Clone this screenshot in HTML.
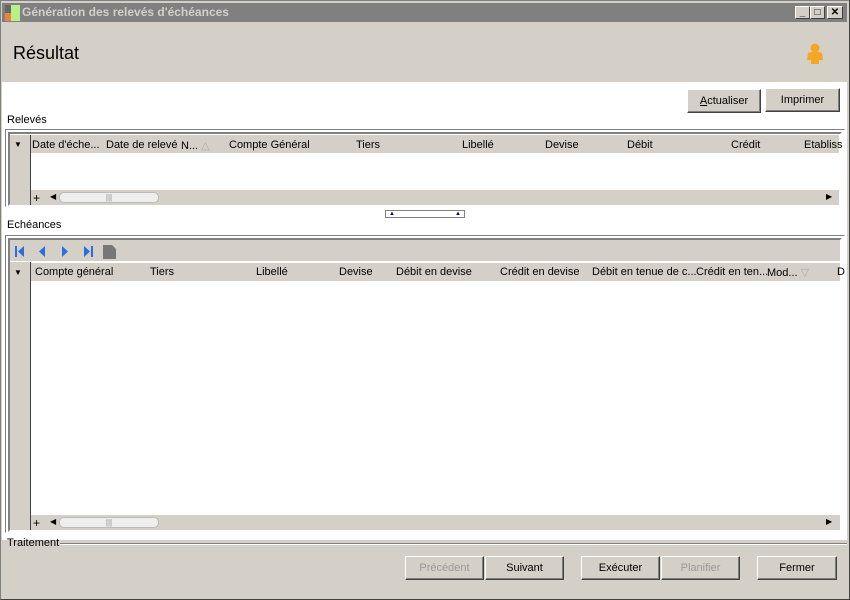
<!DOCTYPE html>
<html><head><meta charset="utf-8"><style>
*{box-sizing:border-box;margin:0;padding:0}
body{width:850px;height:600px;overflow:hidden;background:#d4d0c8;font-family:"Liberation Sans",sans-serif;font-size:11px;color:#000;position:relative}
.a{position:absolute}
.win{left:0;top:0;width:850px;height:600px;border:1px solid #808080;border-right-color:#404040;border-bottom-color:#404040}
.tb{left:2px;top:3px;width:845px;height:19px;background:#808080}
.tt{left:22px;top:5px;color:#d4d0c8;font-weight:bold;font-size:12px}
.cb{top:6px;width:15px;height:13px;background:#d4d0c8;border:1px solid;border-color:#fff #404040 #404040 #fff;font-size:10px;text-align:center;line-height:11px;font-weight:bold}
.btn{height:24px;background:#d4d0c8;border:1px solid;border-color:#fff #404040 #404040 #fff;box-shadow:inset -1px -1px 0 #808080;text-align:center;line-height:22px;font-size:11px}
.dis{color:#9a9a9a}
.sb{background:#d4d0c8}
</style></head><body>
<div class="a win"></div>
<div class="a tb"></div>
<div class="a" style="left:5px;top:5px;width:6px;height:16px;background:#666"></div>
<div class="a" style="left:5px;top:13px;width:6px;height:8px;background:#f08040"></div>
<div class="a" style="left:11px;top:5px;width:9px;height:16px;background:#b8f088"></div>
<div class="a tt">Génération des relevés d'échéances</div>
<div class="a cb" style="left:795px">_</div>
<div class="a cb" style="left:810px">□</div>
<div class="a cb" style="left:827px;width:16px">✕</div>
<div class="a" style="left:13px;top:43px;font-size:18px">Résultat</div>
<svg class="a" style="left:805px;top:42px" width="20" height="24"><circle cx="10" cy="6" r="4.5" fill="#f5a623"/><path d="M3 11 Q10 8 17 11 L18 18 L14 18 L14 22 L6 22 L6 18 L2 18Z" fill="#f5a623"/></svg>
<div class="a" style="left:2px;top:82px;width:845px;height:458px;background:#fff"></div>
<div class="a btn" style="left:687px;top:89px;width:74px"><u>A</u>ctualiser</div>
<div class="a btn" style="left:765px;top:88px;width:75px">Imprimer</div>
<div class="a" style="left:7px;top:114px">Relevés</div>
<div class="a" style="left:5px;top:129px;width:840px;height:78px;border:1px solid #808080;border-bottom-color:#fff;border-right-color:#fff"></div>
<div class="a" style="left:8px;top:132px;width:834px;height:74px;border:2px solid #808080;border-color:#808080 #fff #fff #808080;background:#fff"></div>
<div class="a sb" style="left:10px;top:135px;width:20px;height:70px"></div>
<div class="a" style="left:30px;top:135px;width:1px;height:70px;background:#404040"></div>
<div class="a sb" style="left:31px;top:135px;width:808px;height:18px"></div>
<div class="a" style="left:14px;top:140px;font-size:8px">▼</div>
<div class="a" style="left:32px;top:139px">Date d'éche...</div>
<div class="a" style="left:106px;top:139px">Date de relevé</div>
<div class="a" style="left:181px;top:139px">N... <span style="color:#aaa">△</span></div>
<div class="a" style="left:229px;top:139px">Compte Général</div>
<div class="a" style="left:356px;top:139px">Tiers</div>
<div class="a" style="left:462px;top:139px">Libellé</div>
<div class="a" style="left:545px;top:139px">Devise</div>
<div class="a" style="left:627px;top:139px">Débit</div>
<div class="a" style="left:731px;top:139px">Crédit</div>
<div class="a" style="left:804px;top:139px">Etabliss</div>
<div class="a sb" style="left:31px;top:190px;width:808px;height:15px"></div>
<div class="a" style="left:33px;top:191px;font-size:12px">+</div>
<div class="a" style="left:50px;top:192px;font-size:8px">◀</div>
<div class="a" style="left:59px;top:192px;width:100px;height:11px;background:#eee;border:1px solid #bbb;border-radius:5px;text-align:center;font-size:8px;line-height:9px;color:#888">|||</div>
<div class="a" style="left:826px;top:192px;font-size:8px">▶</div>
<div class="a" style="left:385px;top:210px;width:80px;height:8px;border:1px solid #808080;background:#fff"></div>
<div class="a" style="left:389px;top:211px;font-size:6px;color:#00006b">▲</div>
<div class="a" style="left:455px;top:211px;font-size:6px;color:#00006b">▲</div>
<div class="a" style="left:7px;top:219px">Echéances</div>
<div class="a" style="left:5px;top:235px;width:840px;height:298px;border:1px solid #808080;border-bottom-color:#fff;border-right-color:#fff"></div>
<div class="a" style="left:8px;top:238px;width:834px;height:294px;border:2px solid #808080;border-color:#808080 #fff #fff #808080;background:#fff"></div>
<div class="a sb" style="left:10px;top:240px;width:830px;height:21px"></div>
<svg class="a" style="left:12px;top:244px" width="110" height="16">
<rect x="3" y="2" width="2" height="11" fill="#2a6ee0"/><path d="M12 2 L6 7.5 L12 13Z" fill="#2a6ee0"/>
<path d="M33 2 L27 7.5 L33 13Z" fill="#2a6ee0"/>
<path d="M50 2 L56 7.5 L50 13Z" fill="#2a6ee0"/>
<path d="M72 2 L78 7.5 L72 13Z" fill="#2a6ee0"/><rect x="79" y="2" width="2" height="11" fill="#2a6ee0"/>
<path d="M91 1 L100 1 L104 5 L104 15 L91 15Z" fill="#777"/>
</svg>
<div class="a sb" style="left:10px;top:262px;width:20px;height:268px"></div>
<div class="a" style="left:30px;top:262px;width:1px;height:268px;background:#404040"></div>
<div class="a sb" style="left:31px;top:263px;width:809px;height:18px"></div>
<div class="a" style="left:14px;top:268px;font-size:8px">▼</div>
<div class="a" style="left:35px;top:266px">Compte général</div>
<div class="a" style="left:150px;top:266px">Tiers</div>
<div class="a" style="left:256px;top:266px">Libellé</div>
<div class="a" style="left:339px;top:266px">Devise</div>
<div class="a" style="left:396px;top:266px">Débit en devise</div>
<div class="a" style="left:500px;top:266px">Crédit en devise</div>
<div class="a" style="left:592px;top:266px">Débit en tenue de c...</div>
<div class="a" style="left:696px;top:266px">Crédit en ten...</div>
<div class="a" style="left:767px;top:266px">Mod... <span style="color:#aaa">▽</span></div>
<div class="a" style="left:837px;top:266px">D</div>
<div class="a sb" style="left:31px;top:515px;width:809px;height:15px"></div>
<div class="a" style="left:33px;top:516px;font-size:12px">+</div>
<div class="a" style="left:50px;top:517px;font-size:8px">◀</div>
<div class="a" style="left:59px;top:517px;width:100px;height:11px;background:#eee;border:1px solid #bbb;border-radius:5px;text-align:center;font-size:8px;line-height:9px;color:#888">|||</div>
<div class="a" style="left:826px;top:517px;font-size:8px">▶</div>
<div class="a" style="left:2px;top:540px;width:845px;height:58px;background:#d4d0c8"></div>
<div class="a" style="left:7px;top:537px">Traitement</div>
<div class="a" style="left:60px;top:543px;width:787px;height:2px;border-top:1px solid #808080;border-bottom:1px solid #fff"></div>
<div class="a btn dis" style="left:405px;top:556px;width:79px">Précédent</div>
<div class="a btn" style="left:485px;top:556px;width:79px">Suivant</div>
<div class="a btn" style="left:581px;top:556px;width:79px">Exécuter</div>
<div class="a btn dis" style="left:661px;top:556px;width:79px">Planifier</div>
<div class="a btn" style="left:757px;top:556px;width:80px">Fermer</div>
</body></html>
